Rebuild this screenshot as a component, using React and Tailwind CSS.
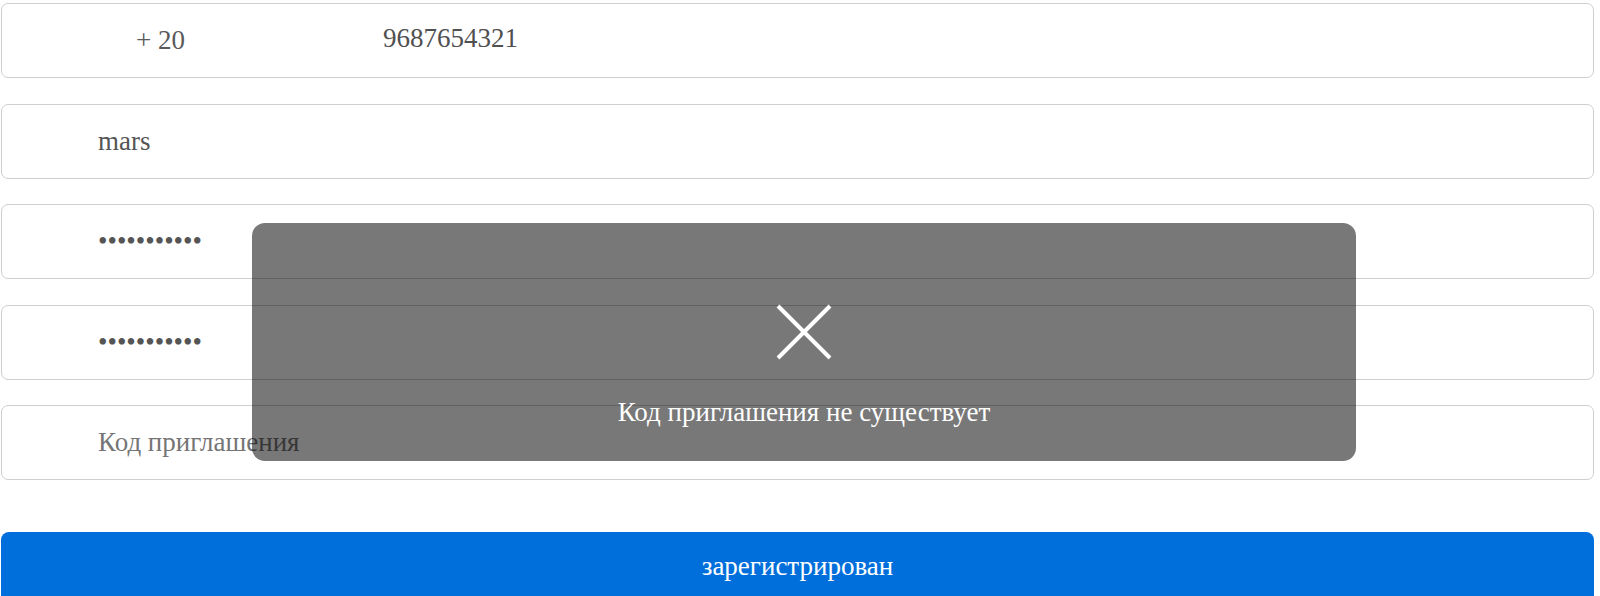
import React from "react";

const serif = { fontFamily: '"Liberation Serif", "Times New Roman", serif' };

function Box({ children, className = "" }) {
  return (
    <div
      className={
        "h-[75px] w-[1593px] shrink-0 rounded-[7px] border border-[#cfcfcf] bg-white flex items-center " +
        className
      }
    >
      {children}
    </div>
  );
}

export default function App() {
  return (
    <div className="relative w-[1600px] h-[596px] overflow-hidden bg-white" style={serif}>
      <div className="pt-[3px] pl-[1px] flex flex-col">
        <Box>
          <span className="ml-[134px] text-[27px] text-[#5a5a5a] leading-none">+ 20</span>
          <span className="ml-[198px] text-[27px] text-[#505050] leading-none -mt-[4px]">9687654321</span>
        </Box>
        <Box className="mt-[26px]">
          <span className="ml-[96px] text-[27px] text-[#555] leading-none">mars</span>
        </Box>
        <Box className="mt-[25px]">
          <span className="ml-[96px] text-[27px] text-[#555] leading-none">•••••••••••</span>
        </Box>
        <Box className="mt-[26px]">
          <span className="ml-[96px] text-[27px] text-[#555] leading-none">•••••••••••</span>
        </Box>
        <Box className="mt-[25px]">
          <span className="ml-[96px] text-[27px] text-[#757575] leading-none">Код приглашения</span>
        </Box>
        <div className="mt-[52px] h-[80px] w-[1593px] rounded-[8px] bg-[#006fdc] flex justify-center pt-[21px]">
          <span className="text-[27px] text-white leading-none">зарегистрирован</span>
        </div>
      </div>

      <div className="absolute left-[252px] top-[223px] w-[1104px] h-[238px] rounded-[13px] bg-[rgba(0,0,0,0.53)] flex flex-col items-center">
        <svg width="56" height="56" viewBox="0 0 56 56" className="mt-[81px]">
          <path d="M2 2 L54 54 M54 2 L2 54" stroke="white" strokeWidth="4" fill="none" />
        </svg>
        <span className="mt-[39px] text-[27px] text-white leading-none">Код приглашения не существует</span>
      </div>
    </div>
  );
}
